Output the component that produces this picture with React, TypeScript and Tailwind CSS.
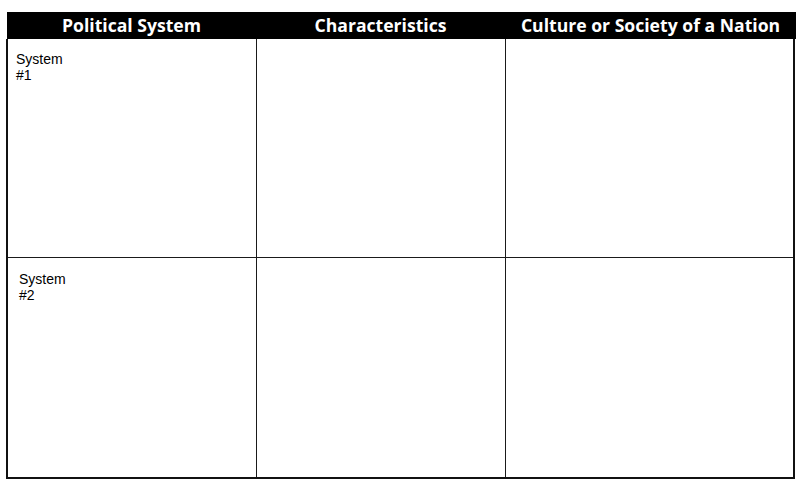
const columns = ["Political System", "Characteristics", "Culture or Society of a Nation"];

function Cell({ label, className }: { label?: string[]; className: string }) {
  return (
    <div className={className}>
      {label && (
        <p className="text-[14px] leading-[16px] text-black" style={{ fontFamily: '"Liberation Sans", Arial, sans-serif' }}>
          {label.map((l) => (
            <span key={l} className="block">
              {l}
            </span>
          ))}
        </p>
      )}
    </div>
  );
}

export default function App() {
  return (
    <div className="w-[800px] h-[484px] bg-white pt-[12px] pl-[6px]">
      {/* Header bar */}
      <div className="ml-[1px] w-[789px] h-[27px] bg-black grid grid-cols-[249px_249px_1fr] items-center">
        {columns.map((c) => (
          <div
            key={c}
            className="text-center text-white font-bold text-[17.6px] leading-none"
            style={{ fontFamily: '"Open Sans", sans-serif' }}
          >
            {c}
          </div>
        ))}
      </div>

      {/* Grid body */}
      <div className="w-[789px] border-2 border-t-0 border-[#111] grid grid-cols-[249px_249px_1fr] grid-rows-[219px_219px]">
        <Cell label={["System", "#1"]} className="border-r border-b border-[#1a1a1a] pl-[8px] pt-[12px]" />
        <Cell className="border-r border-b border-[#1a1a1a]" />
        <Cell className="border-b border-[#1a1a1a]" />
        <Cell label={["System", "#2"]} className="border-r border-[#1a1a1a] pl-[11px] pt-[13px]" />
        <Cell className="border-r border-[#1a1a1a]" />
        <Cell className="" />
      </div>
    </div>
  );
}
